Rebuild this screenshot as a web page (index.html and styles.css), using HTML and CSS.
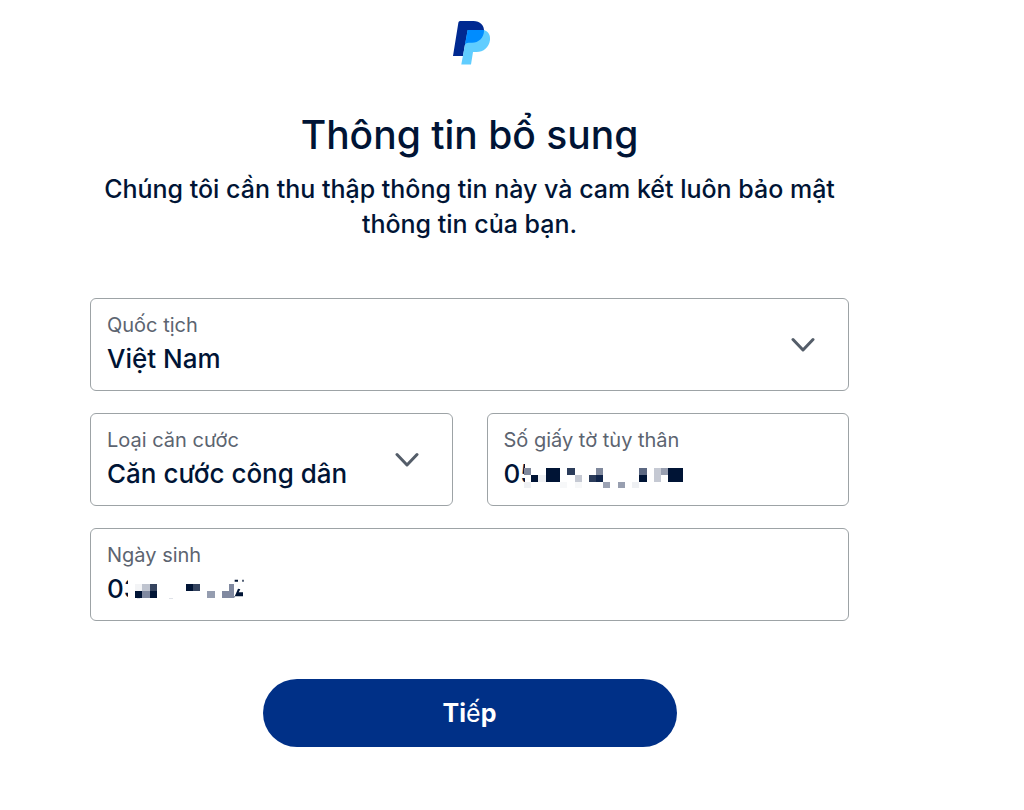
FILE: index.html
```html
<!DOCTYPE html>
<html lang="vi">
<head>
<meta charset="utf-8">
<meta name="viewport" content="width=device-width, initial-scale=1">
<title>Thông tin bổ sung</title>
<link rel="stylesheet" href="styles.css">
</head>
<body>
<main class="page">
  <header class="header">
    <svg class="logo" viewBox="-4 0 42 44" role="img" aria-label="PayPal">
      <path fill="#002991" d="M7 0H20.500C27 0 31.500 4.500 31 10.500C30.500 18.500 24 23.500 17 23.500H12L10 35H0L5.400 1.500Q5.700 0 7 0Z"/>
      <path fill="#60cdff" d="M14.700 9H31C35.500 10.500 37.500 14 37 19C36 26.500 30.500 31 23.500 31H20L18 43.500H8.300Z"/>
      <path fill="#008cff" d="M14.700 9H31.100C31 17.500 25 22 18.500 21.700H15.500Q13 22 12 23.500Z"/>
    </svg>
    <h1 class="title">Thông tin bổ sung</h1>
    <p class="intro">Chúng tôi cần thu thập thông tin này và cam kết luôn bảo mật thông tin của bạn.</p>
  </header>
  <form class="form">
    <div class="field">
      <label class="label" for="nationality">Quốc tịch</label>
      <select class="control" id="nationality"><option>Việt Nam</option></select>
      <svg class="chevron" viewBox="0 0 24 16" aria-hidden="true"><path d="M2 2.500L12 13L22 2.500"/></svg>
    </div>
    <div class="row">
      <div class="field">
        <label class="label" for="idtype">Loại căn cước</label>
        <select class="control" id="idtype"><option>Căn cước công dân</option></select>
        <svg class="chevron" viewBox="0 0 24 16" aria-hidden="true"><path d="M2 2.500L12 13L22 2.500"/></svg>
      </div>
      <div class="field">
        <label class="label" for="idnumber">Số giấy tờ tùy thân</label>
        <input class="control" id="idnumber" type="text" value="05">
        <svg class="mask mask-number" viewBox="0 0 480 84" shape-rendering="crispEdges" aria-hidden="true">
          <path fill="#fff" d="M4 0H480V84H4Z"/>
          <path fill="#001435" d="M22 36h21v21h-21zM65 15h43v42H65zM346 36h22v21h-22zM433 15h43v42h-43z"/>
          <path fill="#2b3c5a" d="M130 15h22v21h-22zM194 36h22v21h-22z"/>
          <path fill="#10254a" d="M216 36h22v21h-22z"/>
          <path fill="#5c6882" d="M346 15h22v21h-22z"/>
          <path fill="#7f889c" d="M0 15h22v21H0zM216 15h22v21h-22z"/>
          <path fill="#989fb0" d="M281 57h21v17h-21zM411 15h22v21h-22z"/>
          <path fill="#9ca3b4" d="M238 57h21v17h-21z"/>
          <path fill="#c5c9d3" d="M152 36h21v21h-21zM389 15h22v42h-22z"/>
          <path fill="#eef0f3" d="M43 36h22v21H43zM0 57h22v17H0zM324 57h22v17h-22z"/>
          <path fill="#f7f8f9" d="M108 57h22v17h-22zM152 57h21v17h-21z"/>
        </svg>
      </div>
    </div>
    <div class="field">
      <label class="label" for="birthdate">Ngày sinh</label>
      <input class="control" id="birthdate" type="text" value="03">
      <svg class="mask mask-date" viewBox="0 0 360 84" aria-hidden="true">
        <path fill="#fff" d="M0 0H360V84H0Z"/>
        <g shape-rendering="crispEdges">
          <path fill="#f3f4f6" d="M21 18h22v22H21z"/>
          <path fill="#001435" d="M21 40h22v20H21zM65 40h22v20H65zM173 18h22v20h-22z"/>
          <path fill="#bfc4cf" d="M43 18h22v22H43z"/>
          <path fill="#8089a0" d="M43 40h22v20H43zM302 18h16v22h-16zM281 40h37v20h-37z"/>
          <path fill="#35445f" d="M65 18h22v22H65zM195 18h22v20h-22z"/>
          <path fill="#959db0" d="M238 40h22v20h-22z"/>
          <path fill="#dfe2e8" d="M124 60h10v3h-10zM28 60h8v3h-8z"/>
        </g>
        <path fill="#001435" d="M318 60L330 32L337 34L332 43H345V55H318ZM320 5H330V11H320ZM343 5H347V11H343Z"/>
      </svg>
    </div>
    <button class="submit" type="button">Ti<span class="light">ế</span>p</button>
  </form>
</main>
</body>
</html>
```
FILE: styles.css
```css
* {
  box-sizing: border-box;
}

body {
  margin: 0;
  background: #fff;
  color: #001435;
  font-family: Inter, "Liberation Sans", sans-serif;
}

.page {
  padding: 21px 175px 62px 90px;
}

.header {
  display: flex;
  flex-direction: column;
  align-items: center;
  text-align: center;
}

.logo {
  width: 42px;
  height: 44px;
}

.title {
  margin: 45px 0 0;
  font-size: 39px;
  line-height: 50px;
  font-weight: 500;
}

.intro {
  margin: 12px 0 0;
  font-size: 25px;
  line-height: 35px;
  font-weight: 500;
}

.form {
  display: flex;
  flex-direction: column;
  gap: 22px;
  margin-top: 56px;
}

.row {
  display: grid;
  grid-template-columns: 1fr 1fr;
  gap: 34px;
}

.field {
  position: relative;
  display: flex;
  flex-direction: column;
  padding: 13px 16px 12px;
  border: 1px solid #9da3a6;
  border-radius: 6px;
}

.label {
  color: #5c6470;
  font-size: 20px;
  line-height: 26px;
}

.control {
  width: 100%;
  height: 40px;
  margin: 0;
  padding: 0;
  border: 0;
  outline: 0;
  appearance: none;
  background: transparent;
  color: inherit;
  font-family: inherit;
  font-size: 26px;
  font-weight: 500;
}

.chevron {
  position: absolute;
  top: 38px;
  right: 33px;
  width: 24px;
  height: 16px;
  fill: none;
  stroke: #545d69;
  stroke-width: 3;
  stroke-linecap: round;
  stroke-linejoin: round;
  pointer-events: none;
}

.mask {
  position: absolute;
  top: 49px;
  height: 28px;
}

.mask-number {
  left: 36px;
  width: 160px;
}

.mask-date {
  left: 37px;
  width: 120px;
}

.submit {
  align-self: center;
  width: 414px;
  max-width: 100%;
  height: 68px;
  margin-top: 36px;
  border: 0;
  border-radius: 34px;
  background: #003087;
  color: #fff;
  font-family: inherit;
  font-size: 25px;
  font-weight: 700;
}

.light {
  font-weight: 400;
}
```
